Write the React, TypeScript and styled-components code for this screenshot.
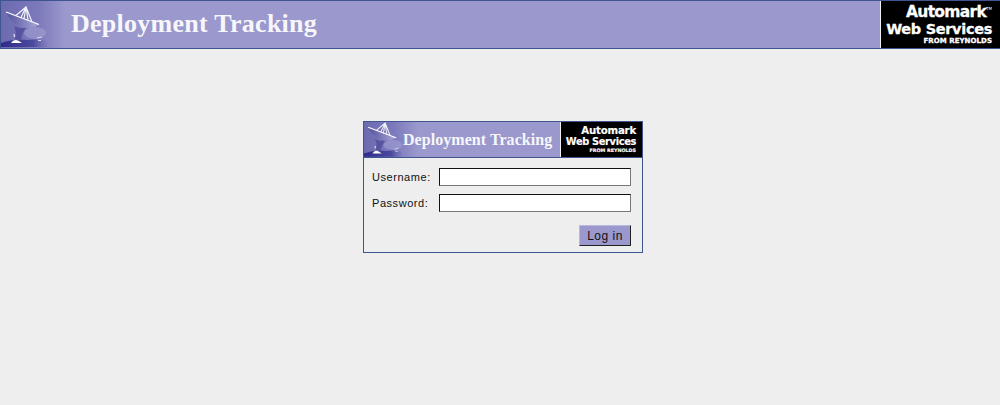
import React from "react";
import styled, { createGlobalStyle } from "styled-components";

const Global = createGlobalStyle`
  html, body { margin: 0; padding: 0; background: #eeeeee; }
  body { height: 405px; overflow: hidden; font-family: "Liberation Sans", Arial, sans-serif; }
`;

const Banner = styled.header`
  display: flex;
  height: 49px;
  box-sizing: border-box;
  background: linear-gradient(90deg, #6d6bb0 0, #7c7abb 38px, #9a98cc 64px);
  border-top: 1px solid #3f5590;
  border-bottom: 1px solid #3f5590;
  border-left: 1px solid #3f5590;
`;

const DishFrame = styled.div<{ $w: number }>`
  flex: none;
  width: ${(p) => p.$w}px;
  line-height: 0;
`;

const Title = styled.h1<{ $size: number; $left: number; $spacing: number; $lift: number }>`
  flex: 1;
  margin: 0;
  padding: 0 0 ${(p) => p.$lift}px ${(p) => p.$left}px;
  color: #f6f6fb;
  font: bold ${(p) => p.$size}px/1 "Liberation Serif", "Times New Roman", serif;
  letter-spacing: ${(p) => p.$spacing}px;
  align-self: center;
  white-space: nowrap;
`;

const Logo = styled.div<{ $w: number; $pad: number; $stroke: number }>`
  flex: none;
  width: ${(p) => p.$w}px;
  box-sizing: border-box;
  background: #000;
  color: #fff;
  border-left: 1px solid #f0f0f6;
  padding-right: ${(p) => p.$pad}px;
  display: flex;
  flex-direction: column;
  align-items: flex-end;
  justify-content: center;
  font-family: "DejaVu Sans", sans-serif;
  font-weight: bold;
  white-space: nowrap;
  -webkit-text-stroke: ${(p) => p.$stroke}px #fff;
`;

const LogoLine = styled.span<{ $size: number; $spacing: number; $lh: number }>`
  font-size: ${(p) => p.$size}px;
  letter-spacing: ${(p) => p.$spacing}px;
  line-height: ${(p) => p.$lh}px;
`;

const Trademark = styled.sup`
  font-size: 4px;
  font-weight: normal;
  line-height: 0;
  vertical-align: 7px;
  letter-spacing: 0;
  -webkit-text-stroke: 0;
`;

const Panel = styled.main`
  width: 280px;
  height: 132px;
  box-sizing: border-box;
  margin: 72px 0 0 363px;
  border: 1px solid #3f5590;
  background: #eeeeee;
`;

const PanelHead = styled.div`
  display: flex;
  height: 36px;
  box-sizing: border-box;
  background: linear-gradient(90deg, #6d6bb0 0, #7c7abb 30px, #9a98cc 54px);
  border-bottom: 1px solid #3f5590;
`;

const Form = styled.form`
  display: flex;
  flex-direction: column;
  padding: 10px 11px 0 8px;
`;

const Row = styled.label`
  display: flex;
  align-items: center;
  justify-content: space-between;
  height: 18px;
  margin-bottom: 8px;
  font-size: 11px;
  letter-spacing: 0.55px;
  color: #111;
`;

const Field = styled.input`
  width: 192px;
  height: 18px;
  box-sizing: border-box;
  margin: 0;
  padding: 0 2px;
  background: #fff;
  border: 1px solid;
  border-color: #111 #777 #777 #111;
  outline: none;
`;

const Actions = styled.div`
  display: flex;
  justify-content: flex-end;
  margin-top: 5px;
`;

const Button = styled.button`
  width: 52px;
  height: 21px;
  box-sizing: border-box;
  padding: 0;
  background: #9a98cc;
  color: #111;
  border: 1px solid;
  border-color: #b9b8de #222 #222 #b9b8de;
  font: 12px "Liberation Sans", Arial, sans-serif;
  letter-spacing: 0.5px;
`;

const Dish = ({ w, h, box, id }: { w: number; h: number; box: string; id: string }) => (
  <svg width={w} height={h} viewBox={box}>
    <defs>
      <linearGradient id={id} x1="0" x2="50" y1="0" y2="0" gradientUnits="userSpaceOnUse">
        <stop offset="0" stopColor="#2d2b88" />
        <stop offset="0.65" stopColor="#4c4a9e" />
        <stop offset="1" stopColor="#7c7abb" stopOpacity="0" />
      </linearGradient>
      <linearGradient id={id + "s"} x1="0" x2="1" y1="0" y2="0">
        <stop offset="0" stopColor="#55539f" />
        <stop offset="1" stopColor="#a9a8d8" />
      </linearGradient>
    </defs>
    <ellipse cx="34" cy="32" rx="11" ry="6" fill="#a5a4d6" opacity="0.55" />
    <path d="M0 42 Q14 37 26 39 Q40 37 50 42 L50 46 L0 46Z" fill={`url(#${id})`} />
    <path d="M5 11 L38 23.5 Q30 29 20 26 Q10 22 5 11Z" fill={`url(#${id}s)`} />
    <path d="M18 27 L25 27 Q21 31 20 39 L14 38 Q16 31 13 25Z" fill="#56549f" />
    <path d="M5 11 L38 23.5" stroke="#fff" strokeWidth="1.3" fill="none" />
    <path d="M15 14.5 L25 6 L27 19 M20 16.5 L25 6 L23 18 M25 6 L31 21" stroke="#f2f2fa" strokeWidth="1.2" fill="none" />
    <path d="M13 33 L13.5 36" stroke="#e6e6f5" strokeWidth="1.2" />
    <path d="M10 42 Q13 37 18 40 L21 42Z" fill="#fff" />
    <path d="M36 37 L41 36 M37 39.5 L40 39.5" stroke="#dcdcf0" strokeWidth="1" />
  </svg>
);

export default function App() {
  return (
    <>
      <Global />
      <Banner>
        <DishFrame $w={50}>
          <Dish w={50} h={46} box="0 0 50 46" id="big" />
        </DishFrame>
        <Title $size={26} $left={20} $spacing={0.27} $lift={2}>Deployment Tracking</Title>
        <Logo $w={120} $pad={8} $stroke={0.3}>
          <LogoLine $size={15.5} $spacing={-0.7} $lh={16.5}>Automark<Trademark>TM</Trademark></LogoLine>
          <LogoLine $size={14.5} $spacing={-0.32} $lh={16.5}>Web Services</LogoLine>
          <LogoLine $size={7} $spacing={0.05} $lh={8}>FROM REYNOLDS</LogoLine>
        </Logo>
      </Banner>
      <Panel>
        <PanelHead>
          <DishFrame $w={39}>
            <Dish w={38} h={35} box="0 5 45 41" id="small" />
          </DishFrame>
          <Title $size={16} $left={0} $spacing={0.05} $lift={0}>Deployment Tracking</Title>
          <Logo $w={82} $pad={6} $stroke={0.15}>
            <LogoLine $size={10.2} $spacing={-0.2} $lh={11}>Automark</LogoLine>
            <LogoLine $size={9.8} $spacing={-0.32} $lh={11}>Web Services</LogoLine>
            <LogoLine $size={4.8} $spacing={0} $lh={7}>FROM REYNOLDS</LogoLine>
          </Logo>
        </PanelHead>
        <Form>
          <Row>Username:<Field type="text" /></Row>
          <Row>Password:<Field type="password" /></Row>
          <Actions><Button type="button">Log in</Button></Actions>
        </Form>
      </Panel>
    </>
  );
}
